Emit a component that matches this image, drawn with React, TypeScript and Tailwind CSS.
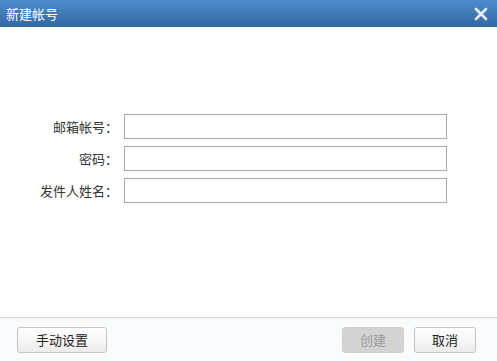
import React from 'react';

const fields = ['邮箱帐号', '密码', '发件人姓名'];

const App: React.FC = () => {
  return (
    <div
      className="w-[497px] h-[361px] flex flex-col bg-white text-[13px] text-[#333]"
      style={{ fontFamily: '"Microsoft YaHei", "Noto Sans CJK SC", sans-serif' }}
    >
      {/* Title bar */}
      <div className="h-[27px] flex items-center justify-between pl-[6px] pr-[9px] bg-gradient-to-b from-[#4d8dcb] to-[#3469a3] text-white">
        <span className="text-[13px] leading-none">新建帐号</span>
        <svg width="14" height="14" viewBox="0 0 14 14">
          <path d="M2 2 L12 12 M12 2 L2 12" stroke="#e8eef5" strokeWidth="2.6" strokeLinecap="round" />
        </svg>
      </div>

      {/* Form */}
      <div className="flex-1 pt-[87px]">
        <div className="flex flex-col gap-[7px]">
          {fields.map((label) => (
            <div key={label} className="flex items-center">
              <span className="w-[120px] text-right pr-[2px]">{label}：</span>
              <input
                type={label === '密码' ? 'password' : 'text'}
                className="ml-[4px] w-[323px] h-[25px] border border-[#a9a9a9] bg-white outline-none px-1"
              />
            </div>
          ))}
        </div>
      </div>

      {/* Footer */}
      <div className="h-[44px] border-t border-[#d6d6d6] bg-[#f9fbfc] flex items-center justify-between pl-[17px] pr-[21px]">
        <button className="w-[90px] h-[26px] rounded-[3px] border border-[#c3c3c3] bg-gradient-to-b from-white to-[#ececec] text-[13px] text-[#222]">
          手动设置
        </button>
        <div className="flex gap-[10px]">
          <button className="w-[62px] h-[26px] rounded-[3px] border border-[#cfcfcf] bg-[#d3d3d3] text-[13px] text-[#9a9a9a]" disabled>
            创建
          </button>
          <button className="w-[62px] h-[26px] rounded-[3px] border border-[#c3c3c3] bg-gradient-to-b from-white to-[#ececec] text-[13px] text-[#222]">
            取消
          </button>
        </div>
      </div>
    </div>
  );
};

export default App;
